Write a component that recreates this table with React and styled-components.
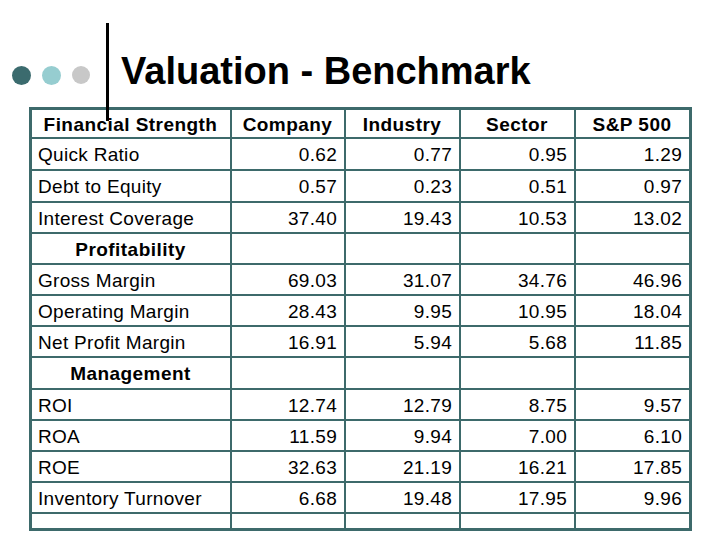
import React from "react";
import styled, { createGlobalStyle } from "styled-components";

const GlobalStyle = createGlobalStyle`
  html, body {
    margin: 0;
    padding: 0;
    background: #ffffff;
  }
  body {
    font-family: "Liberation Sans", Arial, sans-serif;
    color: #000;
  }
`;

const columns = ["Company", "Industry", "Sector", "S&P 500"];

const sections = [
  {
    title: "Financial Strength",
    header: true,
    rows: [
      ["Quick Ratio", "0.62", "0.77", "0.95", "1.29"],
      ["Debt to Equity", "0.57", "0.23", "0.51", "0.97"],
      ["Interest Coverage", "37.40", "19.43", "10.53", "13.02"],
    ],
  },
  {
    title: "Profitability",
    rows: [
      ["Gross Margin", "69.03", "31.07", "34.76", "46.96"],
      ["Operating Margin", "28.43", "9.95", "10.95", "18.04"],
      ["Net Profit Margin", "16.91", "5.94", "5.68", "11.85"],
    ],
  },
  {
    title: "Management",
    rows: [
      ["ROI", "12.74", "12.79", "8.75", "9.57"],
      ["ROA", "11.59", "9.94", "7.00", "6.10"],
      ["ROE", "32.63", "21.19", "16.21", "17.85"],
      ["Inventory Turnover", "6.68", "19.48", "17.95", "9.96"],
    ],
  },
];

const App = () => {
  return (
    <>
      <GlobalStyle />
      <Page>
        <Header>
          <Dots>
            <Dot color="#3b6b6e" />
            <Dot color="#96cdd0" />
            <Dot color="#c8c8c8" size={18} />
          </Dots>
          <Title>Valuation - Benchmark</Title>
        </Header>
        <Rule />
        <Grid>
          {sections.map((section) => (
            <React.Fragment key={section.title}>
              <Cell bold center>
                {section.title}
              </Cell>
              {columns.map((col) => (
                <Cell key={col} bold center>
                  {section.header ? col : ""}
                </Cell>
              ))}
              {section.rows.map((row) =>
                row.map((value, i) => (
                  <Cell key={row[0] + i} right={i > 0}>
                    {value}
                  </Cell>
                ))
              )}
            </React.Fragment>
          ))}
          {[0, 1, 2, 3, 4].map((i) => (
            <Cell key={"end" + i} />
          ))}
        </Grid>
      </Page>
    </>
  );
};

const Page = styled.div`
  position: relative;
  width: 720px;
  height: 540px;
  overflow: hidden;
`;

const Header = styled.div`
  display: flex;
  align-items: center;
  box-sizing: border-box;
  height: 107px;
  padding: 30px 0 0 12px;
`;

const Dots = styled.div`
  display: flex;
  align-items: center;
  gap: 11px;
  margin-top: 13px;
`;

const Dot = styled.span`
  display: block;
  width: ${(p) => p.size || 19}px;
  height: ${(p) => p.size || 19}px;
  border-radius: 50%;
  background: ${(p) => p.color};
`;

const Title = styled.h1`
  margin: 4px 0 0 31px;
  font-size: 38px;
  line-height: 1;
  font-weight: bold;
`;

const Rule = styled.div`
  position: absolute;
  left: 106px;
  top: 23px;
  width: 3px;
  height: 98px;
  background: #000;
  z-index: 2;
`;

const Grid = styled.div`
  display: grid;
  grid-template-columns: 198px 112px 113px 113px 113px;
  grid-template-rows: 27px 30px 30px 29px 29px 29px 29px 29px 30px 29px 29px 29px 29px 14px;
  gap: 2px;
  width: max-content;
  margin-left: 29px;
  border: 3px solid #3d6a6b;
  background: #3d6a6b;
`;

const Cell = styled.div`
  display: flex;
  align-items: center;
  justify-content: ${(p) =>
    p.center ? "center" : p.right ? "flex-end" : "flex-start"};
  box-sizing: border-box;
  padding: 2px 7px 0 6px;
  background: #fff;
  font-size: 19px;
  font-weight: ${(p) => (p.bold ? "bold" : "normal")};
  letter-spacing: ${(p) => (p.bold ? "0.45px" : "0.3px")};
  white-space: nowrap;
`;

export default App;
